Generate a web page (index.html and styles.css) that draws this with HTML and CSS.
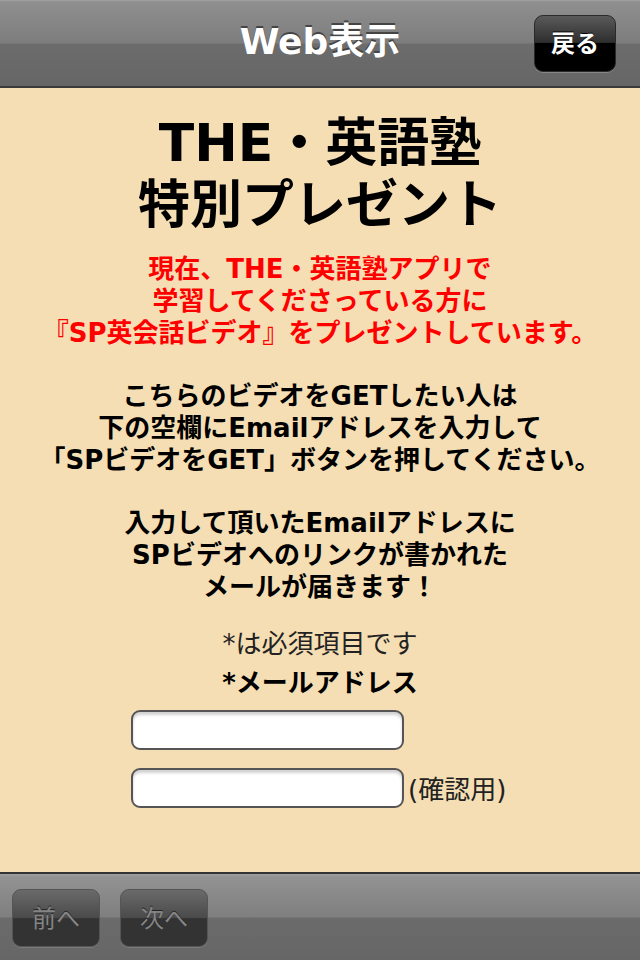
FILE: index.html
```html
<!DOCTYPE html>
<html lang="ja">
<head>
<meta charset="utf-8">
<link rel="stylesheet" href="styles.css">
</head>
<body>
<div class="screen">
  <header class="navbar">
    <div class="nav-title">Web表示</div>
    <div class="back-btn">戻る</div>
  </header>
  <main class="content">
    <h1 class="title">THE・英語塾<br>特別プレゼント</h1>
    <p class="body-text">
      <span class="red">現在、THE・英語塾アプリで<br>学習してくださっている方に<br>『SP英会話ビデオ』をプレゼントしています。</span><br><br>
      こちらのビデオをGETしたい人は<br>下の空欄にEmailアドレスを入力して<br>「SPビデオをGET」ボタンを押してください。<br><br>
      入力して頂いたEmailアドレスに<br>SPビデオへのリンクが書かれた<br>メールが届きます！
    </p>
    <div class="required-note">*は必須項目です</div>
    <div class="field-label">*メールアドレス</div>
    <div class="form">
      <div class="row"><div class="input"></div></div>
      <div class="row"><div class="input"></div><span class="confirm">(確認用)</span></div>
    </div>
  </main>
  <footer class="toolbar">
    <div class="tool-btn">前へ</div>
    <div class="tool-btn">次へ</div>
  </footer>
</div>
</body>
</html>
```
FILE: styles.css
```css
* { box-sizing: border-box; margin: 0; padding: 0; }
html, body { width: 640px; height: 960px; overflow: hidden; }
body {
  font-family: "DejaVu Sans", "Noto Sans CJK JP", sans-serif;
  background: #f5deb3;
}
.screen {
  width: 640px;
  height: 960px;
  display: flex;
  flex-direction: column;
}
.navbar {
  height: 88px;
  flex: none;
  position: relative;
  display: flex;
  align-items: center;
  justify-content: center;
  background: linear-gradient(to bottom, #a3a3a3 0px, #8f8f8f 2px, #7d7d7d 43px, #6c6c6c 44px, #666666 86px);
  border-bottom: 2px solid #3a3a3a;
}
.nav-title {
  color: #fff;
  font-size: 36px;
  font-weight: bold;
  text-shadow: 0 -2px 0 #444;
  margin-top: -10px;
}
.back-btn {
  position: absolute;
  left: 534px;
  top: 15px;
  width: 82px;
  height: 57px;
  border-radius: 9px;
  border: 1px solid #2a2a2a;
  box-shadow: 0 1px 0 #888;
  background: linear-gradient(to bottom, #5a5a5a 0%, #2e2e2e 48%, #000 50%, #000 100%);
  color: #fff;
  font-size: 24px;
  font-weight: bold;
  display: flex;
  align-items: center;
  justify-content: center;
  text-shadow: 0 -1px 0 #000;
  padding-bottom: 4px;
}
.content {
  flex: 1;
  background: #f5deb3;
  text-align: center;
  color: #000;
  padding-top: 24px;
}
.title {
  font-size: 52px;
  line-height: 62px;
  font-weight: bold;
}
.body-text {
  margin-top: 18px;
  font-size: 26px;
  line-height: 31.8px;
  font-weight: bold;
}
.red { color: #ff0000; }
.required-note {
  margin-top: 21px;
  font-size: 26px;
  line-height: 39px;
  color: #222;
}
.field-label {
  font-size: 26px;
  line-height: 39px;
  font-weight: bold;
}
.form {
  width: 378px;
  margin: 7px auto 0;
  display: flex;
  flex-direction: column;
  gap: 18px;
}
.row {
  display: flex;
  align-items: center;
  height: 40px;
}
.input {
  width: 273px;
  height: 40px;
  background: #fff;
  border: 2px solid #555;
  border-radius: 9px;
  box-shadow: inset 0 3px 3px rgba(0,0,0,0.18);
}
.confirm {
  margin-left: 4px;
  font-size: 26px;
  color: #222;
  white-space: nowrap;
}
.toolbar {
  height: 88px;
  flex: none;
  display: flex;
  align-items: center;
  gap: 20px;
  padding: 0 12px;
  border-top: 2px solid #333;
  background: linear-gradient(to bottom, #a0a0a0 0px, #929292 3px, #7f7f7f 43px, #6b6b6b 44px, #666 86px);
}
.tool-btn {
  width: 88px;
  height: 58px;
  margin-top: 2px;
  border-radius: 9px;
  border: 1px solid #555;
  box-shadow: 0 1px 0 #7a7a7a;
  background: linear-gradient(to bottom, #6a6a6a 0%, #4a4a4a 50%, #333 51%, #333 100%);
  color: #858585;
  font-size: 24px;
  display: flex;
  align-items: center;
  justify-content: center;
  text-shadow: 0 -1px 0 #222;
  padding-bottom: 4px;
}
```
